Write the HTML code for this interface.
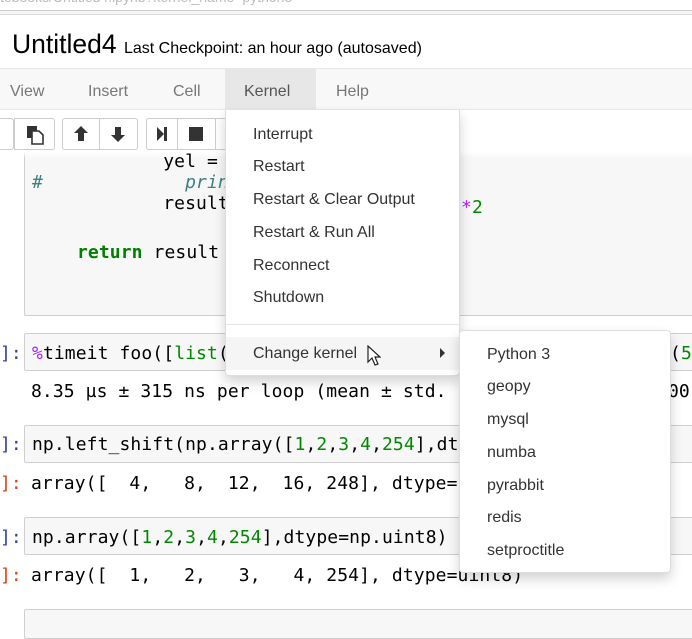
<!DOCTYPE html>
<html><head><style>
*{box-sizing:border-box;margin:0;padding:0}
body{width:692px;height:616px;overflow:hidden;background:#fff;position:relative;font-family:"Liberation Sans",sans-serif}
.abs{position:absolute}
.mono{font-family:"DejaVu Sans Mono","Liberation Mono",monospace;font-size:18px;white-space:pre;color:#000;letter-spacing:0.1px}
.box{position:absolute;left:24px;right:-2px;background:#f7f7f7;border:1px solid #cfcfcf;border-radius:2px}
.btn{position:absolute;top:118px;height:32px;border:1px solid #ccc;background:#fff}
.mi{position:absolute;left:27px;font-size:16px;color:#333}
.si{position:absolute;left:27px;font-size:16px;color:#333}
.g{color:#080}.p{color:#a2f}.k{color:#008000;font-weight:bold}
.bp{color:#303f9f}.rp{color:#d84315}
</style></head><body>
<div class="abs" style="left:0;top:-11px;font-size:14px;color:#bbb">tebooks/Untitled4.ipynb?kernel_name=python3</div>
<div class="abs" style="left:0;top:10px;width:692px;height:5px;border-top:1px solid #ccc;border-bottom:1px solid #ddd;background:#f5f5f5"></div>
<div class="abs" style="left:12px;top:29px;font-size:26.5px;color:#000">Untitled4 <span style="font-size:16px">Last Checkpoint: an hour ago (autosaved)</span></div>
<div class="abs" style="left:0;top:68px;width:692px;height:42px;background:#f8f8f8;border-top:1px solid #e7e7e7;border-bottom:1px solid #e7e7e7"></div>
<div class="abs" style="left:225px;top:69px;width:91px;height:41px;background:#e7e7e7"></div>
<div class="abs" style="top:83px;left:10px;font-size:16px;color:#777">View</div>
<div class="abs" style="top:83px;left:88px;font-size:16px;color:#777">Insert</div>
<div class="abs" style="top:83px;left:173px;font-size:16px;color:#777">Cell</div>
<div class="abs" style="top:83px;left:244px;font-size:16px;color:#555">Kernel</div>
<div class="abs" style="top:83px;left:336px;font-size:16px;color:#777">Help</div>
<div class="btn" style="left:-10px;width:24px;border-radius:0 3px 3px 0"></div>
<div class="btn" style="left:14px;width:41px;border-radius:0 3px 3px 0"><svg width="40" height="30"><rect x="12" y="7" width="10" height="12" fill="#333"/><path d="M17 12h7l4 4v9h-11z" fill="#fff" stroke="#333" stroke-width="1.6"/></svg></div>
<div class="btn" style="left:62px;width:38px;border-radius:3px 0 0 3px"><svg width="36" height="30"><path d="M18 7l-7 7h4v8h6v-8h4z" fill="#333"/></svg></div>
<div class="btn" style="left:99px;width:39px;border-radius:0 3px 3px 0"><svg width="36" height="30"><path d="M18 23l-7-7h4v-8h6v8h4z" fill="#333"/></svg></div>
<div class="btn" style="left:146px;width:32px;border-radius:3px 0 0 3px"><svg width="30" height="30"><path d="M10 8l7 7-7 7z" fill="#333"/><rect x="17" y="8" width="3" height="14" fill="#333"/></svg></div>
<div class="btn" style="left:177px;width:39px"><svg width="36" height="30"><rect x="11" y="8" width="14" height="14" fill="#333"/></svg></div>
<div class="btn" style="left:215px;width:20px"></div>
<div class="abs" style="left:0;top:157px;width:692px;height:459px;background:#fff"></div>
<div class="box" style="top:150px;height:166px;border-top:none"></div>
<div class="abs" style="left:0;top:150px;width:692px;height:8px;background:linear-gradient(#fff,#fff 2px,rgba(255,255,255,0))"></div>
<div class="abs mono" style="left:32px;top:151px">            yel =
<span style="color:#408080">#</span>             <i style="color:#408080">prin</i>
            result
</div>
<div class="abs mono" style="left:77px;top:242px"><span class="k">return</span> result</div>
<div class="abs mono" style="left:461px;top:197px"><span class="p">*</span><span class="g">2</span></div>

<div class="abs mono bp" style="left:0;top:343px">]:</div>
<div class="box" style="top:333px;height:38px"></div>
<div class="abs mono" style="left:32px;top:343px"><span class="p">%</span>timeit foo([<span class="g">list</span>(</div>
<div class="abs mono" style="left:670px;top:343px">(<span class="g">5</span></div>
<div class="abs mono" style="left:31px;top:381px">8.35 µs ± 315 ns per loop (mean ± std.</div>
<div class="abs mono" style="left:668px;top:381px">00</div>

<div class="abs mono bp" style="left:0;top:434px">]:</div>
<div class="box" style="top:425px;height:38px"></div>
<div class="abs mono" style="left:32px;top:434px">np.left_shift(np.array([<span class="g">1</span>,<span class="g">2</span>,<span class="g">3</span>,<span class="g">4</span>,<span class="g">254</span>],dt</div>
<div class="abs mono rp" style="left:0;top:473px">]:</div>
<div class="abs mono" style="left:31px;top:473px">array([  4,   8,  12,  16, 248], dtype=</div>

<div class="abs mono bp" style="left:0;top:527px">]:</div>
<div class="box" style="top:517px;height:38px"></div>
<div class="abs mono" style="left:32px;top:527px">np.array([<span class="g">1</span>,<span class="g">2</span>,<span class="g">3</span>,<span class="g">4</span>,<span class="g">254</span>],dtype=np.uint8)</div>
<div class="abs mono rp" style="left:0;top:565px">]:</div>
<div class="abs mono" style="left:31px;top:565px">array([  1,   2,   3,   4, 254], dtype=uint8)</div>
<div class="box" style="top:609px;height:30px"></div>

<div class="abs" style="left:225px;top:110px;width:235px;height:266px;background:#fff;border:1px solid #ddd;border-top:none;box-shadow:0 6px 12px rgba(0,0,0,.175);border-radius:0 0 4px 4px">
<div class="mi" style="top:16px">Interrupt</div>
<div class="mi" style="top:48px">Restart</div>
<div class="mi" style="top:81px">Restart &amp; Clear Output</div>
<div class="mi" style="top:114px">Restart &amp; Run All</div>
<div class="mi" style="top:147px">Reconnect</div>
<div class="mi" style="top:179px">Shutdown</div>
<div class="abs" style="left:0;top:214px;width:233px;height:1px;background:#e5e5e5"></div>
<div class="abs" style="left:0;top:227px;width:233px;height:33px;background:#f5f5f5"></div>
<div class="mi" style="top:235px">Change kernel</div>
<svg class="abs" style="left:213px;top:238px" width="8" height="10"><path d="M1 0l5 5-5 5z" fill="#333"/></svg>
<svg class="abs" style="left:141px;top:235px" width="14" height="22"><path d="M1 1v16l4-4 3 7 3-1-3-7h5z" fill="#fff" stroke="#222" stroke-width="1.2"/></svg>
</div>
<div class="abs" style="left:459px;top:330px;width:212px;height:243px;background:#fff;border:1px solid #ddd;box-shadow:0 6px 12px rgba(0,0,0,.175);border-radius:4px">
<div class="si" style="top:15px">Python 3</div>
<div class="si" style="top:47px">geopy</div>
<div class="si" style="top:80px">mysql</div>
<div class="si" style="top:113px">numba</div>
<div class="si" style="top:146px">pyrabbit</div>
<div class="si" style="top:178px">redis</div>
<div class="si" style="top:211px">setproctitle</div>
</div>
</body></html>
